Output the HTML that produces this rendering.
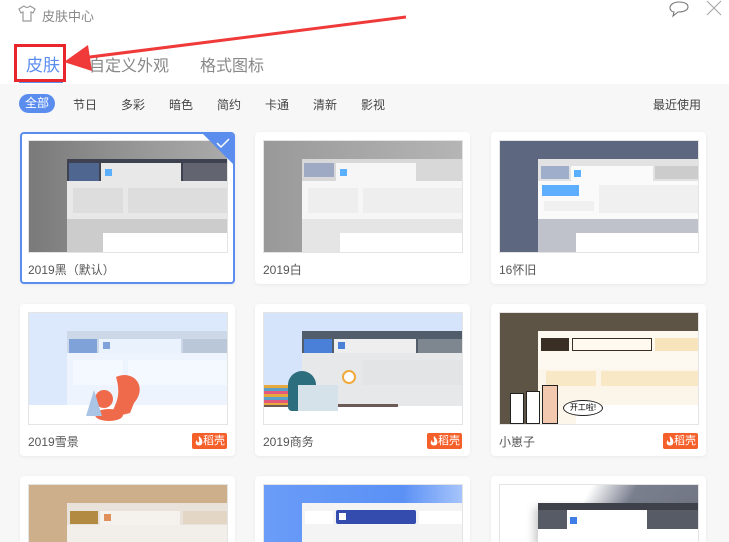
<!DOCTYPE html>
<html style="width:729px;height:542px;overflow:hidden"><head><meta charset="utf-8"><style>
*{margin:0;padding:0;box-sizing:border-box}
body{width:729px;height:542px;overflow:hidden;background:#f7f7f7;font-family:"Liberation Sans","Noto Sans CJK SC",sans-serif;position:relative;color:#333}
.hdr{position:absolute;left:0;top:0;width:729px;height:84px;background:#fff}
.a{position:absolute}
.card{position:absolute;width:215px;height:152px;background:#fff;border-radius:4px;box-shadow:0 1px 3px rgba(0,0,0,.06);overflow:hidden}
.short{height:66px;border-radius:4px 4px 0 0}
.th{position:absolute;left:8px;top:8px;width:200px;height:113px;overflow:hidden;border:1px solid #e4e4e4}
.short .th{height:58px;border-bottom:none}
.short .win{height:40px}
.lbl{position:absolute;left:8px;top:129px;font-size:12px;color:#555}
.badge{position:absolute;right:8px;top:129px;width:35px;height:16px;background:#f5602a;border-radius:2px;color:#fff;font-size:11px;line-height:16px;padding-left:11px}
.badge svg{position:absolute;left:3px;top:3px}
.win{position:absolute;left:38px;top:18px;width:170px;height:100px}
.f{position:absolute;top:96px;font-size:12px;color:#444}
</style></head><body>
<div class="hdr"></div>
<svg class="a" style="left:18px;top:5px" width="18" height="17" viewBox="0 0 18 17"><path d="M6 1 L1 4 L3 8 L5 7 V16 H13 V7 L15 8 L17 4 L12 1 Q9 4 6 1Z" fill="none" stroke="#999" stroke-width="1.2"/></svg>
<div class="a" style="left:42px;top:6px;font-size:13px;color:#888">皮肤中心</div>
<svg class="a" style="left:669px;top:0" width="20" height="18"><path d="M10 2 C4 2 1 5 1 8 C1 10 3 12 5 12 L4 16 L9 12 C15 12 19 10 19 7 C19 4 16 2 10 2Z" fill="none" stroke="#777" stroke-width="1.1"/></svg>
<svg class="a" style="left:705px;top:0" width="18" height="16"><path d="M2 1 L16 15 M16 1 L2 15" stroke="#aaa" stroke-width="1.2"/></svg>
<div class="a" style="left:26px;top:51px;font-size:17px;color:#5b8def">皮肤</div>
<div class="a" style="left:19px;top:80px;width:44px;height:3px;background:#5b8def"></div>
<div class="a" style="left:14px;top:44px;width:52px;height:38px;border:3px solid #e8262b"></div>
<div class="a" style="left:89px;top:52px;font-size:16px;color:#888">自定义外观</div>
<div class="a" style="left:200px;top:52px;font-size:16px;color:#888">格式图标</div>
<svg class="a" style="left:60px;top:14px" width="350" height="60"><path d="M346 3 L22 44" stroke="#f03a3a" stroke-width="3"/><polygon points="4,48 28,31 32,57" fill="#f03a3a"/></svg>
<div class="a" style="left:19px;top:94px;width:36px;height:19px;border-radius:10px;background:#5b8def;color:#fff;font-size:12px;line-height:19px;text-align:center">全部</div>
<div class="f" style="left:73px">节日</div><div class="f" style="left:121px">多彩</div><div class="f" style="left:169px">暗色</div><div class="f" style="left:217px">简约</div><div class="f" style="left:265px">卡通</div><div class="f" style="left:313px">清新</div><div class="f" style="left:361px">影视</div>
<div class="f" style="left:653px">最近使用</div>

<div class="card" style="left:20px;top:132px;border:2px solid #5b8def">
 <div class="th" style="left:6px;top:6px;background:linear-gradient(90deg,#7a7a7a,#999 60%,#aaa)">
  <div class="win" style="background:#ccc"><div class="a" style="left:0;top:0;width:170px;height:22px;background:#3d4150"></div><div class="a" style="left:2px;top:4px;width:30px;height:18px;background:#4f6690"></div><div class="a" style="left:34px;top:4px;width:80px;height:18px;background:#e8e8e8"></div><div class="a" style="left:38px;top:10px;width:7px;height:7px;background:#5aafff"></div><div class="a" style="left:116px;top:4px;width:54px;height:18px;background:#62646f"></div><div class="a" style="left:0;top:22px;width:170px;height:38px;background:#e8e8e8"></div><div class="a" style="left:6px;top:29px;width:50px;height:25px;background:#ddd"></div><div class="a" style="left:61px;top:29px;width:109px;height:25px;background:#ddd"></div><div class="a" style="left:36px;top:74px;width:134px;height:26px;background:#fff"></div></div>
 </div>
 <svg class="a" style="right:0;top:0" width="30" height="30"><polygon points="0,0 30,0 30,30" fill="#5b8def"/><path d="M14 9 L18 13 L26 5" stroke="#fff" fill="none" stroke-width="1.5"/></svg>
 <div class="lbl" style="left:6px;top:127px">2019黑（默认）</div>
</div>
<div class="card" style="left:255px;top:132px">
 <div class="th" style="background:linear-gradient(90deg,#999,#b5b5b5)">
  <div class="win" style="background:#e5e5e5"><div class="a" style="left:0;top:0;width:170px;height:22px;background:#d8d8d8"></div><div class="a" style="left:2px;top:4px;width:30px;height:14px;background:#9eaac4"></div><div class="a" style="left:34px;top:4px;width:80px;height:18px;background:#f6f6f6"></div><div class="a" style="left:38px;top:10px;width:7px;height:7px;background:#5aafff"></div><div class="a" style="left:0;top:22px;width:170px;height:38px;background:#f6f6f6"></div><div class="a" style="left:6px;top:29px;width:50px;height:25px;background:#eee"></div><div class="a" style="left:61px;top:29px;width:109px;height:25px;background:#eee"></div><div class="a" style="left:38px;top:74px;width:132px;height:26px;background:#fff"></div></div>
 </div>
 <div class="lbl">2019白</div>
</div>
<div class="card" style="left:491px;top:132px">
 <div class="th" style="background:#5d6880">
  <div class="win" style="background:#c0c2cb"><div class="a" style="left:0;top:0;width:170px;height:22px;background:#e2e2e2"></div><div class="a" style="left:3px;top:7px;width:28px;height:13px;background:#9eaecb"></div><div class="a" style="left:33px;top:7px;width:82px;height:15px;background:#fafafa"></div><div class="a" style="left:36px;top:11px;width:7px;height:7px;background:#5aafff"></div><div class="a" style="left:117px;top:7px;width:53px;height:13px;background:#ccc"></div><div class="a" style="left:0;top:22px;width:170px;height:38px;background:#fafafa"></div><div class="a" style="left:4px;top:26px;width:37px;height:11px;background:#5eaeff"></div><div class="a" style="left:6px;top:42px;width:50px;height:10px;background:#f0f0f0"></div><div class="a" style="left:61px;top:26px;width:109px;height:28px;background:#f0f0f0"></div><div class="a" style="left:38px;top:74px;width:132px;height:26px;background:#fff"></div></div>
 </div>
 <div class="lbl">16怀旧</div>
</div>

<div class="card" style="left:20px;top:304px">
 <div class="th" style="background:#dce8fc">
  <div class="win" style="background:#eef4fe"><div class="a" style="left:0;top:0;width:170px;height:22px;background:#ccd7e8"></div><div class="a" style="left:2px;top:8px;width:28px;height:14px;background:#7fa3d8"></div><div class="a" style="left:32px;top:8px;width:82px;height:14px;background:#eaf2fe"></div><div class="a" style="left:36px;top:11px;width:7px;height:7px;background:#7fa3d8"></div><div class="a" style="left:116px;top:8px;width:54px;height:14px;background:#bac7d9"></div><div class="a" style="left:6px;top:29px;width:50px;height:25px;background:#f4f8ff"></div><div class="a" style="left:61px;top:29px;width:109px;height:25px;background:#f4f8ff"></div></div>
  <div class="a" style="left:0;top:92px;width:200px;height:21px;background:#fff"></div>
  <svg class="a" style="left:55px;top:60px" width="70" height="52"><path d="M32 4 C50 -4 64 14 50 30 L46 40 L30 44 C24 36 40 30 32 4Z" fill="#ef6a4a"/><circle cx="20" cy="26" r="9" fill="#ef6a4a"/><ellipse cx="25" cy="42" rx="14" ry="6" fill="#ef6a4a"/></svg>
  <svg class="a" style="left:55px;top:77px" width="20" height="34"><polygon points="10,0 2,26 18,26" fill="#a9c4e4"/></svg>
 </div>
 <div class="lbl">2019雪景</div><div class="badge"><svg width="8" height="10"><path d="M4 0 C7 3 8 5 7 8 C6 10 2 10 1 8 C0 6 2 4 2 4 C2 6 3 7 4 6 C5 4 3 2 4 0Z" fill="#fff"/></svg>稻壳</div>
</div>
<div class="card" style="left:255px;top:304px">
 <div class="th" style="background:#d5e3fb">
  <div class="win" style="background:#e6e8ea"><div class="a" style="left:0;top:0;width:170px;height:22px;background:#525d6b"></div><div class="a" style="left:2px;top:8px;width:28px;height:14px;background:#4a80d8"></div><div class="a" style="left:32px;top:8px;width:82px;height:14px;background:#eee"></div><div class="a" style="left:36px;top:11px;width:7px;height:7px;background:#4a80d8"></div><div class="a" style="left:116px;top:8px;width:54px;height:14px;background:#7e868f"></div><div class="a" style="left:61px;top:29px;width:109px;height:25px;background:#e2e4e6"></div></div>
  <div class="a" style="left:0;top:93px;width:200px;height:18px;background:#fff"></div>
  <div class="a" style="left:0;top:91px;width:134px;height:3px;background:#6b5a55"></div>
  <div class="a" style="left:24px;top:58px;width:28px;height:40px;border-radius:14px 14px 4px 4px;background:#2d6e7e"></div>
  <div class="a" style="left:34px;top:72px;width:40px;height:26px;background:#d6e2ea"></div>
  <div class="a" style="left:0;top:72px;width:24px;height:20px;background:repeating-linear-gradient(#e7a93d 0 3px,#5aa0c8 3px 6px,#e55a7a 6px 9px)"></div>
  <div class="a" style="left:78px;top:57px;width:14px;height:14px;border-radius:50%;border:2px solid #f0a93a;background:#fff"></div>
 </div>
 <div class="lbl">2019商务</div><div class="badge"><svg width="8" height="10"><path d="M4 0 C7 3 8 5 7 8 C6 10 2 10 1 8 C0 6 2 4 2 4 C2 6 3 7 4 6 C5 4 3 2 4 0Z" fill="#fff"/></svg>稻壳</div>
</div>
<div class="card" style="left:491px;top:304px">
 <div class="th" style="background:#5e5446">
  <div class="win" style="background:#fcf6ea"><div class="a" style="left:0;top:0;width:170px;height:38px;background:#fdf9f0"></div><div class="a" style="left:3px;top:7px;width:28px;height:13px;background:#3a2f25"></div><div class="a" style="left:34px;top:7px;width:80px;height:13px;border:1px solid #3a2f25;background:#fffaf0"></div><div class="a" style="left:117px;top:7px;width:53px;height:13px;background:#f7e4bc"></div><div class="a" style="left:8px;top:40px;width:50px;height:15px;background:#f8e8c6"></div><div class="a" style="left:63px;top:40px;width:107px;height:15px;background:#f8e8c6"></div><div class="a" style="left:38px;top:74px;width:132px;height:26px;background:#fff"></div></div>
  <div class="a" style="left:10px;top:80px;width:14px;height:31px;background:#fff;border:1px solid #222"></div>
  <div class="a" style="left:26px;top:78px;width:14px;height:33px;background:#fff;border:1px solid #222"></div>
  <div class="a" style="left:42px;top:72px;width:16px;height:39px;background:#f2c8ae;border:1px solid #222"></div>
  <div class="a" style="left:63px;top:87px;width:40px;height:16px;background:#fff;border:1px solid #222;border-radius:50%;font-size:8px;line-height:14px;text-align:center;color:#000">开工啦!</div>
 </div>
 <div class="lbl">小崽子</div><div class="badge"><svg width="8" height="10"><path d="M4 0 C7 3 8 5 7 8 C6 10 2 10 1 8 C0 6 2 4 2 4 C2 6 3 7 4 6 C5 4 3 2 4 0Z" fill="#fff"/></svg>稻壳</div>
</div>

<div class="card short" style="left:20px;top:476px">
 <div class="th" style="background:#cdaf8c"><div class="win" style="background:#f2efea"><div class="a" style="left:0;top:0;width:170px;height:22px;background:#e8e2da"></div><div class="a" style="left:3px;top:8px;width:28px;height:13px;background:#b38a42"></div><div class="a" style="left:33px;top:8px;width:80px;height:14px;background:#f5f2ee"></div><div class="a" style="left:37px;top:11px;width:7px;height:7px;background:#e0905a"></div><div class="a" style="left:116px;top:8px;width:54px;height:13px;background:#e3d6c4"></div></div></div>
</div>
<div class="card short" style="left:255px;top:476px">
 <div class="th" style="background:linear-gradient(90deg,#6a9cf8,#5b91f5 70%,#a6c4fb)"><div class="win" style="background:#f4f4f4"><div class="a" style="left:3px;top:8px;width:28px;height:13px;background:#fff"></div><div class="a" style="left:34px;top:7px;width:80px;height:14px;background:#334cae;border-radius:2px"></div><div class="a" style="left:37px;top:10px;width:7px;height:7px;background:#fff"></div><div class="a" style="left:117px;top:8px;width:53px;height:13px;background:#fff"></div></div></div>
</div>
<div class="card short" style="left:491px;top:476px">
 <div class="th" style="background:linear-gradient(120deg,#fff 40%,#7a7f8e 60%,#6f7382)"><div class="win" style="background:#fff;box-shadow:-4px 4px 8px rgba(0,0,0,.2)"><div class="a" style="left:0;top:0;width:170px;height:26px;background:#565b66"></div><div class="a" style="left:0;top:0;width:170px;height:7px;background:#3e4149"></div><div class="a" style="left:29px;top:7px;width:80px;height:19px;background:#fff"></div><div class="a" style="left:32px;top:14px;width:7px;height:7px;background:#3e7ee6"></div></div></div>
</div>
</body></html>
